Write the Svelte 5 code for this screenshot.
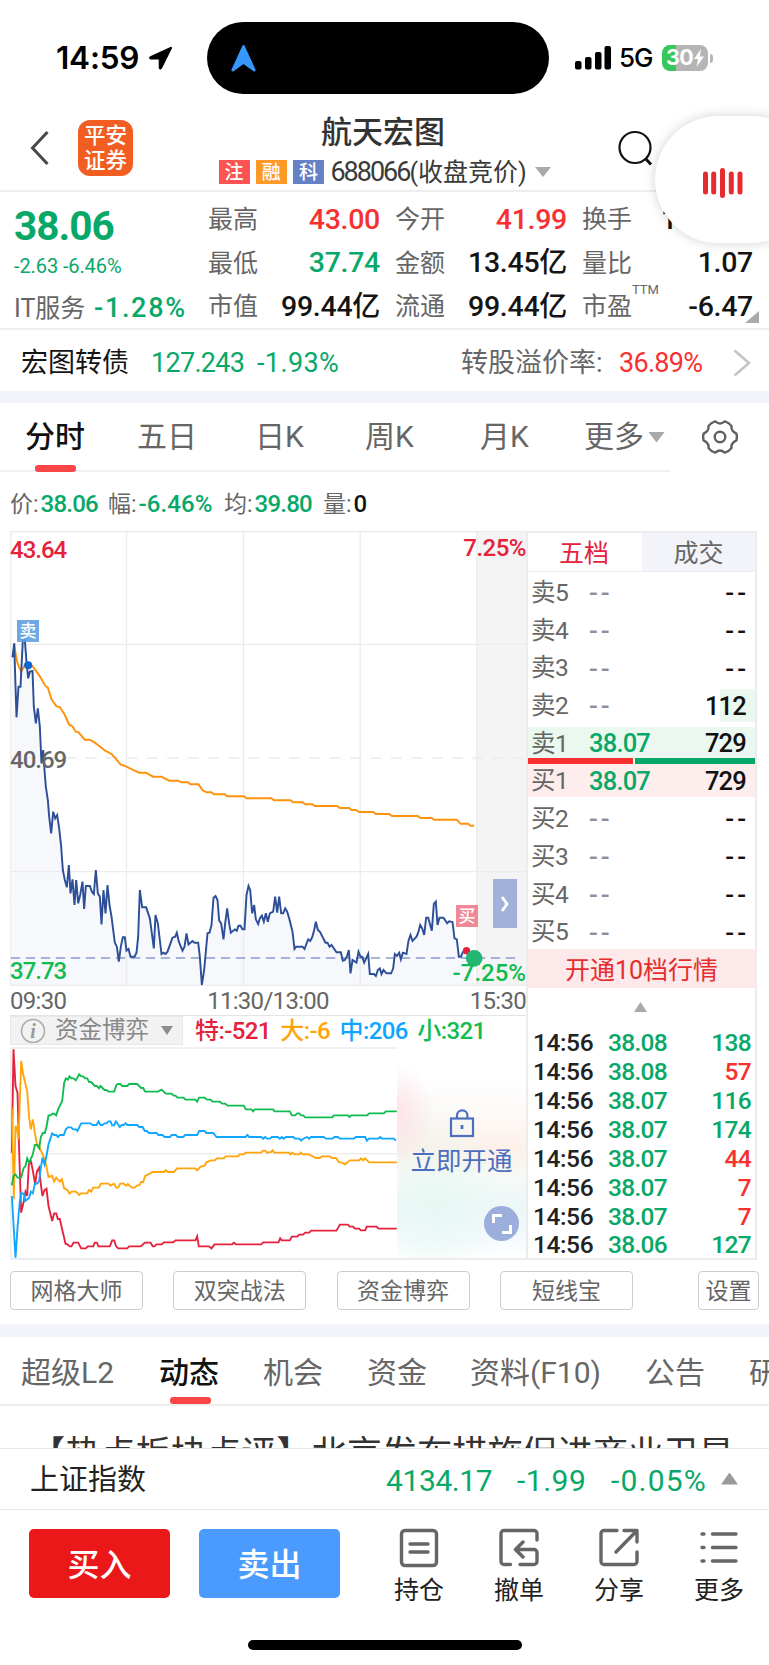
<script>
  const quotes = [
    ['最高', '43.00', 'red'], ['今开', '41.99', 'red'], ['换手', '12.35%', 'ink'],
    ['最低', '37.74', 'green'], ['金额', '13.45', 'ink', '亿'], ['量比', '1.07', 'ink'],
    ['市值', '99.44', 'ink', '亿'], ['流通', '99.44', 'ink', '亿'], ['市盈', '-6.47', 'ink']
  ];
  const asks = [['卖5'], ['卖4'], ['卖3'], ['卖2', '', '112'], ['卖1', '38.07', '729']];
  const bids = [['买1', '38.07', '729'], ['买2'], ['买3'], ['买4'], ['买5']];
  const ticks = [
    ['38.08', 138, 'green'], ['38.08', 57, 'red'], ['38.07', 116, 'green'], ['38.07', 174, 'green'],
    ['38.07', 44, 'red'], ['38.07', 7, 'red'], ['38.07', 7, 'red'], ['38.06', 127, 'green']
  ];
  const tools = ['网格大师', '双突战法', '资金博弈', '短线宝'];

  // Chart series are stored at three units per pixel.
  const price =
    '38,-278 43,-320 50,-98 56,-190 62,-190 69,-330 75,-330 80,-265 85,-215 90,-235 98,-237 102,-130 108,-80 114,-125 120,-70 125,40 130,0 134,60 138,110 144,150 148,200 154,250 160,185 166,205 172,195 178,235 184,290 189,360 195,390 201,412 207,345 212,430 218,388 224,465 229,390 235,460 241,435 248,395 253,477 258,408 270,408 276,425 282,432 288,360 294,430 300,440 305,523 311,420 317,490 323,405 329,465 335,500 345,578 351,590 357,635 363,590 369,562 375,562 380,602 386,597 392,620 404,620 410,608 415,560 420,420 427,472 439,472 450,505 456,550 462,595 467,495 474,520 480,570 485,612 491,608 497,612 503,605 518,563 526,560 531,548 537,575 548,602 554,590 560,550 566,583 578,573 584,578 595,578 600,620 606,705 613,660 623,550 629,548 635,525 641,443 647,438 653,450 658,512 664,520 671,568 676,520 682,475 688,520 693,548 705,538 711,542 716,527 722,527 728,538 734,538 740,435 746,408 751,420 757,490 763,465 768,508 775,522 780,505 786,497 792,515 798,490 804,515 810,490 820,485 826,440 832,488 838,440 844,490 850,490 856,475 862,485 868,505 878,545 884,597 889,590 908,590 914,597 925,568 931,573 937,562 943,540 948,515 954,540 960,545 977,578 983,578 989,590 995,585 1010,607 1023,607 1029,632 1035,630 1041,620 1047,600 1052,670 1058,630 1070,638 1076,605 1082,620 1087,620 1093,638 1105,612 1110,672 1122,672 1128,678 1134,660 1140,655 1145,672 1151,660 1160,670 1174,670 1180,655 1185,612 1191,618 1198,608 1203,628 1209,608 1220,612 1226,572 1232,555 1238,573 1250,560 1255,548 1261,525 1267,535 1273,555 1279,503 1285,503 1296,542 1302,462 1308,455 1313,525 1319,503 1331,503 1342,520 1348,514 1358,516 1364,565 1371,568 1377,620 1383,620 1390,605 1398,600 1408,622 1423,625';
  const average =
    '43,-320 47,-290 52,-265 58,-248 64,-235 75,-255 98,-252 110,-235 122,-218 136,-193 144,-187 155,-152 170,-131 180,-129 195,-105 208,-76 217,-72 228,-55 236,-53 255,-31 270,-31 285,-22 298,-12 316,2 335,12 348,26 362,43 380,50 404,62 418,68 438,68 460,80 485,80 508,92 535,92 545,97 565,97 572,103 596,103 608,121 620,127 635,127 642,133 675,133 682,139 732,139 740,145 815,145 822,151 872,151 880,157 908,157 916,163 938,163 945,168 1012,168 1020,174 1048,174 1055,180 1068,180 1078,186 1120,186 1128,192 1168,192 1176,198 1254,198 1262,204 1295,204 1303,209 1370,209 1382,221 1405,221 1412,227 1423,227';
  const flows = [
    ['#e5213c', '36,455 41,145 47,255 53,275 58,450 64,635 72,600 77,572 82,585 87,490 94,483 100,515 106,550 111,512 118,500 123,550 128,585 134,567 140,563 146,615 157,660 163,637 169,637 174,654 180,654 187,685 197,728 203,730 209,736 215,736 221,725 235,725 244,742 258,742 264,736 280,736 285,725 291,725 296,736 330,736 337,718 343,718 349,736 355,742 382,742 388,736 423,736 435,725 452,725 459,736 464,736 470,730 486,730 492,724 520,724 527,718 587,718 592,706 597,736 627,736 635,742 644,730 697,730 702,725 708,730 784,730 790,724 836,724 841,712 846,718 870,718 876,707 892,707 898,701 910,701 916,695 928,695 934,689 1010,689 1020,671 1044,671 1050,677 1060,677 1065,683 1078,683 1083,688 1096,688 1101,677 1130,677 1136,683 1191,683'],
    ['#ffa50a', '36,320 42,595 47,375 52,385 56,415 60,300 64,180 70,220 82,270 88,350 93,385 99,355 105,395 111,428 118,435 128,460 136,478 146,528 157,525 163,542 169,530 180,542 186,535 193,562 203,567 209,578 215,572 228,572 238,582 244,577 262,577 268,567 274,572 280,560 297,560 303,548 326,548 332,554 343,548 349,560 355,560 361,548 372,548 378,554 384,549 396,560 404,560 412,553 418,553 424,543 430,543 436,525 460,513 492,513 498,508 504,513 522,513 532,502 586,502 592,508 602,497 614,495 620,484 633,478 645,478 651,472 672,472 678,466 714,466 720,460 732,460 738,455 784,455 790,449 796,449 802,455 814,453 818,448 823,455 868,455 872,460 878,455 884,460 898,460 903,455 908,460 928,460 948,471 960,471 966,466 990,466 996,471 1008,471 1018,484 1024,484 1036,490 1050,478 1078,478 1084,472 1090,478 1095,472 1108,484 1191,484'],
    ['#10bc50', '36,553 41,525 47,520 53,530 64,530 71,502 77,495 82,472 88,485 99,460 105,432 111,432 118,442 123,408 129,396 135,396 140,378 146,343 152,343 158,338 163,338 169,343 175,325 187,300 193,245 198,232 204,236 209,226 215,232 221,232 228,238 238,220 244,226 250,226 256,232 262,232 268,243 274,243 285,255 291,255 297,262 302,255 314,267 320,267 326,272 343,272 350,252 355,249 362,249 367,255 382,255 388,249 412,249 424,261 430,261 436,272 475,272 485,266 498,278 515,278 522,284 527,284 533,290 551,290 557,296 586,296 592,302 598,290 614,290 622,296 632,296 638,302 660,302 667,308 676,308 684,314 732,314 738,325 755,325 760,331 765,325 820,325 824,331 870,331 876,343 886,343 892,337 898,337 904,343 910,343 916,349 998,349 1002,343 1044,343 1049,348 1054,343 1102,343 1108,337 1152,337 1158,331 1191,331'],
    ['#0fa6ff', '36,585 47,770 53,680 60,600 64,577 72,578 76,600 88,590 93,572 99,577 105,548 112,548 118,540 123,500 128,470 134,490 140,465 146,430 157,397 163,402 169,402 175,408 180,402 192,402 198,385 204,379 214,379 220,385 228,385 233,390 244,367 272,367 278,372 290,372 296,361 302,372 308,372 314,367 320,367 326,361 332,361 337,373 343,373 348,361 360,378 366,372 372,372 377,367 383,372 412,372 418,378 428,378 435,390 441,390 447,396 470,396 476,402 488,402 494,408 510,408 516,402 528,402 534,408 550,408 556,402 592,402 598,390 614,390 620,396 640,396 650,408 737,408 743,402 748,408 784,408 790,413 796,408 802,413 810,413 816,408 834,408 840,413 846,408 852,413 858,408 880,408 886,413 898,413 904,419 910,413 922,408 928,413 934,408 972,408 978,413 998,413 1004,408 1014,408 1020,413 1062,413 1068,408 1096,408 1101,419 1107,413 1136,413 1141,408 1147,413 1182,413 1188,419']
  ];
</script>

{#snippet level(row)}
  <div class="level">
    <span class="lv">{row[0]}</span>
    {#if row[1]}<span class="lp green">{row[1]}</span>{:else}<span class="dash">--</span>{/if}
    {#if row[2]}<span class="lq">{row[2]}</span>{:else}<span class="dash dark">--</span>{/if}
  </div>
{/snippet}

<div class="page">
  <div class="status">
    <span class="clock">14:59</span>
    <svg class="loc" width="24" height="24" viewBox="0 0 24 24"><path d="M22.200 1.500 2 10.800c-1.200.6-.8 2.200.4 2.200h8.400v8.700c0 1.300 1.700 1.600 2.200.4L22.800 2.200c.3-.6-.1-.9-.6-.7z" fill="#000" stroke="#000" stroke-width="1.200" stroke-linejoin="round" /></svg>
    <div class="island">
      <svg width="25" height="27" viewBox="0 0 25 27"><path d="M11.400.8c.4-1 1.800-1 2.200 0L24.500 24.500c.5 1.400-.8 2.500-2 1.700L12.500 19l-10 7.200c-1.200.8-2.500-.3-2-1.700z" fill="#3498ff" /></svg>
    </div>
    <svg class="bars" width="36" height="24" viewBox="0 0 36 24"><g fill="#000"><rect y="15" width="6.500" height="8.500" rx="2" /><rect x="10" y="11" width="6.500" height="12.500" rx="2" /><rect x="20" y="6" width="6.500" height="17.500" rx="2" /><rect x="29.500" y="0" width="6.500" height="23.500" rx="2" /></g></svg>
    <span class="net">5G</span>
    <div class="battery"><span>30</span><svg width="12" height="18" viewBox="0 0 12 18"><path d="M8 0 1 10h4l-1.500 8L11 7.500H6.800z" fill="#fff" /></svg></div>
    <i class="nub"></i>
  </div>

  <header>
    <svg class="back" width="20" height="36" viewBox="0 0 20 36"><path d="M17.500 2 2.500 18l15 16" fill="none" stroke="#484848" stroke-width="3" /></svg>
    <div class="logo"><span>平安</span><span>证券</span></div>
    <div class="names">
      <h1>航天宏图</h1>
      <div class="code">
        <b style="background:#fb5452">注</b><b style="background:#fd9a27">融</b><b style="background:#6681c6">科</b>
        <span><em>688066</em>(收盘竞价)</span>
        <svg width="16" height="10" viewBox="0 0 16 10"><path d="M0 0h16L8 10z" fill="#aaa" /></svg>
      </div>
    </div>
    <svg class="search" width="36" height="36" viewBox="0 0 36 36"><g fill="none" stroke="#111" stroke-width="2.200"><circle cx="17" cy="17.500" r="15.500" /><path d="m27.500 28.500 5.500 6" stroke-width="3" /></g></svg>
  </header>

  <section class="summary">
    <div class="main">
      <strong class="green">38.06</strong>
      <span class="chg green">-2.63 -6.46%</span>
      <div class="ind"><span>IT服务</span><b class="green">-1.28%</b></div>
    </div>
    <div class="quotes">
      {#each quotes as q}
        <div class="q"><span>{q[0]}</span><b class={q[2]}>{q[1]}{#if q[3]}<i>{q[3]}</i>{/if}</b></div>
      {/each}
    </div>
    <small class="ttm">TTM</small>
    <i class="corner"></i>
  </section>

  <section class="bond">
    <span class="ink">宏图转债</span><span class="green n">127.243</span><span class="green n pct">-1.93%</span>
    <span class="grey">转股溢价率:</span><span class="red n">36.89%</span>
    <svg width="18" height="28" viewBox="0 0 18 28"><path d="m1.500 1.500 14.500 12.500-14.500 12.500" fill="none" stroke="#c4c4c4" stroke-width="2.600" /></svg>
  </section>
  <div class="band"></div>

  <nav class="periods">
    <span class="on">分时</span><span>五日</span><span>日K</span><span>周K</span><span>月K</span>
    <span>更多<i class="down"></i></span>
    <svg width="36" height="36" viewBox="0 0 34 34"><g fill="none" stroke="#616161" stroke-width="2.300" stroke-linejoin="round"><path d="M12.500 2.200q2.500 2 4.500 2t4.500-2q4 1.200 6.300 4.300-.2 3 1.100 4.600 1.200 1.600 3.600 2.700.8 3.200 0 6.400-2.400 1.100-3.600 2.700-1.300 1.600-1.100 4.600-2.300 3.100-6.300 4.300-2.500-2-4.500-2t-4.500 2q-4-1.200-6.300-4.300.2-3-1.100-4.600-1.200-1.600-3.600-2.700-.8-3.200 0-6.400 2.400-1.100 3.600-2.700 1.300-1.600 1.100-4.600 2.300-3.100 6.300-4.300z" /><circle cx="17" cy="17" r="5" /></g></svg>
  </nav>

  <div class="legend">
    <span>价:<b class="green">38.06</b></span><span>幅:<b class="green w">-6.46%</b></span><span>均:<b class="green">39.80</b></span><span>量:<b class="ink">0</b></span>
  </div>

  <section class="trade">
    <div class="charts">
      <div class="chart">
        <svg width="516" height="455" viewBox="30.500 -657 1548 1365">
          <rect x="1431" y="-657" width="148" height="1362" fill="#f4f4f4" />
          <polygon points="{price} 1423,705 38,705" fill="#f6f8fc" />
          <g stroke="#ebebeb" stroke-width="4" fill="none">
            <path d="M33-655H1579M33-657V705M380-657V705M731-657V705M1081-657V705M1431-657V705M33-317H1579M33 365H1579M33 706H1579" />
            <path d="M33 24H1579" stroke-dasharray="33 28" stroke-dashoffset="-42" />
          </g>
          <path d="M33 624H1561" stroke="#8c9ccb" stroke-width="5" stroke-dasharray="28 17" />
          <polyline points={average} fill="none" stroke="#ff920d" stroke-width="5.800" />
          <polyline points={price} fill="none" stroke="#2d4f98" stroke-width="5.800" />
          <circle cx="85" cy="-254" r="12" fill="#0a66d4" />
          <circle cx="1400" cy="602" r="11" fill="#e5213c" />
          <circle cx="1423" cy="625" r="25" fill="#22b573" />
        </svg>
        <span class="lab tl">43.64</span><span class="lab tr">7.25%</span>
        <span class="lab ml">40.69</span><span class="lab bl">37.73</span><span class="lab br">-7.25%</span>
        <b class="mark sell">卖</b><b class="mark buy">买</b>
        <div class="expand"><svg width="10" height="16" viewBox="0 0 10 16"><path d="m2 1 5 7-5 7" fill="none" stroke="#fff" stroke-width="2.800" /></svg></div>
      </div>
      <div class="axis"><span>09:30</span><span>11:30/13:00</span><span>15:30</span></div>
      <div class="flowhead">
        <div class="pick">
          <svg width="26" height="26" viewBox="0 0 26 26"><circle cx="13" cy="13" r="11.500" fill="none" stroke="#aaa" stroke-width="1.500" /><text x="13" y="20" text-anchor="middle" font-family="Liberation Serif, serif" font-style="italic" font-weight="700" font-size="20" fill="#999">i</text></svg>
          <span>资金博弈</span><i class="down small"></i>
        </div>
        <span style="color:#e5213c">特:-521</span><span style="color:#ffa50a">大:-6</span><span style="color:#0fa6ff">中:206</span><span style="color:#10bc50">小:321</span>
      </div>
      <div class="flow">
        <svg width="387" height="213" viewBox="30.500 138 1161 639">
          <path d="M32 141H1192M33 141V775M32 458H1192M32 774H1192" stroke="#ebebeb" stroke-width="4" />
          {#each flows as f}<polyline points={f[1]} fill="none" stroke={f[0]} stroke-width="5.600" />{/each}
        </svg>
        <div class="locked">
          <svg width="26" height="30" viewBox="0 0 26 30"><g fill="none" stroke="#4c6fbd" stroke-width="2.200"><rect x="2" y="10.500" width="22" height="17.500" /><path d="M8 10V7.500a5.200 5.200 0 0 1 10.400 0V10" /><path d="M13 17v4" stroke-width="2.800" /></g></svg>
          <span>立即开通</span>
          <div class="full"><svg width="20" height="20" viewBox="0 0 20 20"><path d="M1.500 9V1.500H10M18.500 11v7.500H10" fill="none" stroke="#fff" stroke-width="3" /></svg></div>
        </div>
      </div>
    </div>

    <div class="book">
      <div class="booktabs"><span class="on">五档</span><span>成交</span></div>
      <div class="asks">{#each asks as r}{@render level(r)}{/each}</div>
      <div class="ratio"><i></i><i></i></div>
      <div class="bids">{#each bids as r}{@render level(r)}{/each}</div>
      <div class="open10">开通10档行情</div>
      <div class="fold"><i class="up"></i></div>
      <div class="ticks">
        {#each ticks as t}<div><span>14:56</span><span class="green">{t[0]}</span><span class={t[2]}>{t[1]}</span></div>{/each}
      </div>
    </div>
  </section>

  <div class="tools">
    {#each tools as t}<button>{t}</button>{/each}<button class="set">设置</button>
  </div>
  <div class="band second"></div>

  <nav class="topics">
    <span>超级L2</span><span class="on">动态</span><span>机会</span><span>资金</span><span>资料(F10)</span><span>公告</span><span>研报</span>
  </nav>
  <div class="news">【热点板块点评】北京发布措施促进商业卫星</div>

  <div class="index">
    <span class="nm">上证指数</span><span>4134.17</span><span class="s1">-1.99</span><span class="s2">-0.05%</span><i class="up"></i>
  </div>

  <footer>
    <button class="b red-bg">买入</button><button class="b blue-bg">卖出</button>
    <div class="act">
      <svg width="40" height="40" viewBox="0 0 40 40"><rect x="2.500" y="2.500" width="35" height="35" rx="3.500" /><path d="M11 16h18M11 24h18" /></svg>
      <span>持仓</span>
    </div>
    <div class="act">
      <svg width="40" height="40" viewBox="0 0 40 40"><path d="M11.500 36.500H5a3 3 0 0 1-3-3v-28a3 3 0 0 1 3-3h30a3 3 0 0 1 3 3V12M24 14l-7.500 7.500 7.500 7.500M17 21.500h18a3 3 0 0 1 3 3v9a3 3 0 0 1-3 3H21" /></svg>
      <span>撤单</span>
    </div>
    <div class="act">
      <svg width="40" height="40" viewBox="0 0 40 40"><path d="M18 2.500H5a3 3 0 0 0-3 3v28a3 3 0 0 0 3 3h30a3 3 0 0 0 3-3V24M25 2.500h13V14M37.500 3 17 24" /></svg>
      <span>分享</span>
    </div>
    <div class="act">
      <svg width="40" height="40" viewBox="0 0 40 40"><path d="M3 6h2M3 19.500h2M3 33h2M13.500 6H37M13.500 19.500H37M13.500 33H37" /></svg>
      <span>更多</span>
    </div>
  </footer>
  <div class="home"></div>

  <div class="float">
    <svg width="40" height="30" viewBox="0 0 40 30"><path d="M2.500 6v18M10.700 6v18M19.500 2.500v25M28.300 6v18M37 6v18" stroke="#e52d30" stroke-width="5" stroke-linecap="round" /></svg>
  </div>
</div>

<style>
  :global(body) { margin: 0; background: #fff; }
  .page {
    position: relative; width: 769px; height: 1665px; overflow: hidden; background: #fff; color: #666;
    font-family: Roboto, 'Noto Sans CJK SC', sans-serif; line-height: 1; white-space: nowrap;
    display: flex; flex-direction: column;
  }
  .page > * { flex: none; }
  * { box-sizing: border-box; }
  i, em { font-style: normal; }
  svg { display: block; flex: none; overflow: hidden; }
  .green { color: #07a868; }
  .red { color: #f73131; }
  .ink { color: #141414; }
  .grey { color: #666; }

  .status { height: 116px; display: flex; align-items: center; padding: 0 0 0 56px; color: #000; font-family: Inter, sans-serif; }
  .clock { font-size: 31.500px; font-weight: 600; width: 92px; letter-spacing: -.2px; }
  .loc { width: 25px; }
  .island { margin-left: 34px; width: 342px; height: 72px; border-radius: 36px; background: #000; display: flex; align-items: center; padding-left: 24px; }
  .bars { margin-left: 26px; }
  .net { margin-left: 8px; width: 43px; font-size: 26px; font-weight: 500; letter-spacing: -1px; }
  .battery { width: 46px; height: 26px; border-radius: 8px; background: linear-gradient(90deg, #35c759 14px, #b5b5b5 14px); color: #fff; display: flex; align-items: center; padding-left: 4px; }
  .battery span { font-size: 21.500px; font-weight: 700; letter-spacing: -.6px; }
  .nub { width: 3px; height: 9px; margin-left: 2px; border-radius: 0 4px 4px 0; background: #b5b5b5; }

  header { height: 76px; display: flex; border-bottom: 2px solid #eee; padding-left: 30px; }
  .back { margin-top: 14px; }
  .logo { margin: 4px 0 0 28px; width: 55px; height: 56px; border-radius: 12px; background: #f25d22; color: #fff; font-size: 21.500px; font-weight: 500; display: flex; flex-direction: column; align-items: center; justify-content: center; line-height: 25px; }
  .names { width: 486px; margin-left: 7px; display: flex; flex-direction: column; align-items: center; }
  h1 { margin: 1px 0 0; font-size: 31px; line-height: 32px; font-weight: 500; color: #333; }
  .code { display: flex; align-items: center; width: 334px; margin-top: 8px; height: 30px; margin-left: 5px; }
  .code b { width: 31px; height: 24px; margin-right: 6.300px; color: #fff; font-size: 19px; font-weight: 500; display: grid; place-items: center; }
  .code span { color: #3a3a3a; font-size: 25px; width: 205px; }
  .code em { font-size: 27px; letter-spacing: -2px; }
  .search { margin: 14px 0 0 -8px; }

  .summary { position: relative; height: 138px; border-bottom: 2px solid #eee; display: flex; }
  .main { width: 208px; padding-left: 14px; display: flex; flex-direction: column; }
  .main strong { font-size: 40.500px; letter-spacing: -1px; margin-top: 14px; height: 40px; }
  .chg { font-size: 20px; height: 21px; margin-top: 10px; letter-spacing: -.1px; }
  .ind { display: flex; margin-top: 17px; align-items: center; }
  .ind span { font-size: 25px; width: 80px; }
  .ind b { font-size: 27px; font-weight: 500; letter-spacing: 1.700px; padding-top: 1px; }
  .quotes { display: grid; grid-template-columns: 187px 187px 171px; grid-template-rows: repeat(3, 43.500px); padding-top: 6px; }
  .q { display: flex; justify-content: space-between; align-items: center; padding-right: 15px; }
  .q:nth-child(3n) { padding-right: 0; }
  .q span { font-size: 25px; }
  .q b { font-size: 28.500px; font-weight: 500; letter-spacing: -.3px; }
  .q b i { font-size: 28px; }
  .ttm { position: absolute; left: 632px; top: 91px; font-size: 13px; }
  .corner { position: absolute; left: 745px; top: 119px; width: 14px; height: 12px; background: #aaa; clip-path: polygon(100% 0, 100% 100%, 0 100%); }

  .bond { height: 61px; display: grid; grid-template-columns: 130px 106px 204px 158px 114px 20px; align-items: center; padding: 5px 0 0 21px; font-size: 27px; }
  .bond .n { font-size: 27px; letter-spacing: -.7px; }
  .bond .pct { letter-spacing: .4px; }
  .band { height: 12px; background: #f2f4f9; }
  .periods { height: 69px; width: 769px; display: grid; grid-template-columns: 112px 118px 110px 115px 104px 118px 40px; padding: 0 0 2px 25px; align-items: center; font-size: 30px; position: relative; }
  .periods::after { content: ''; position: absolute; left: 0; bottom: 0; width: 670px; height: 2px; background: #f1f1f1; }
  .periods .on, .topics .on { color: #111; font-weight: 500; position: relative; }
  .periods .on::after { content: ''; position: absolute; left: 10px; top: 43px; width: 41px; height: 7px; border-radius: 3px; background: #f94747; z-index: 1; }
  .down { display: inline-block; width: 17px; height: 11px; background: #aaa; clip-path: polygon(0 0, 100% 0, 50% 100%); margin-left: 4px; vertical-align: 4px; }
  .legend { height: 59px; display: grid; grid-template-columns: 98px 116px 99px 60px; align-items: center; padding: 4px 0 0 10px; font-size: 23px; }
  .legend b { font-size: 24px; font-weight: 500; letter-spacing: -.8px; margin-left: 2px; }
  .legend .w { letter-spacing: .1px; }

  .trade { height: 729px; display: flex; padding-left: 10px; }
  .charts { width: 518px; border-right: 2px solid #ececec; }
  .chart { position: relative; height: 455px; }
  .lab { position: absolute; font-size: 24px; font-weight: 500; letter-spacing: -1px; }
  .tl { left: 0; top: 7px; color: #e5213c; }
  .tr { right: 0; top: 5px; color: #e5213c; letter-spacing: -.5px; }
  .ml { left: 0; top: 217px; }
  .bl { left: 0; top: 428px; color: #10bc50; }
  .br { right: 0; top: 430px; color: #10bc50; letter-spacing: 0; }
  .mark { position: absolute; width: 22px; height: 22px; font-size: 17px; font-weight: 500; color: #fff; display: grid; place-items: center; }
  .sell { left: 7px; top: 89px; background: #5fa0e0e6; }
  .buy { left: 446px; top: 374px; background: #ef7b8ce6; }
  .expand { position: absolute; left: 483px; top: 348px; width: 24px; height: 49px; background: #a2b1da; display: grid; place-items: center; }
  .axis { height: 30px; display: grid; grid-template-columns: 1fr 1.100fr 1fr; align-items: center; font-size: 24px; letter-spacing: -.7px; padding: 1px 0 0 0; border-bottom: 1px solid #e4e4e4; }
  .axis span:nth-child(2) { text-align: center; }
  .axis span:nth-child(3) { text-align: right; }
  .flowhead { height: 31px; display: flex; align-items: center; font-size: 24px; font-weight: 500; }
  .flowhead > span { margin: 0 9.500px 2px 0; letter-spacing: -.6px; }
  .pick { width: 173px; height: 29px; margin: 0 12px 2px 0; background: #f2f2f2; border: 1px solid #e8e8e8; display: flex; align-items: center; padding-left: 9px; color: #888; font-weight: 400; font-size: 23.500px; }
  .pick span { margin-left: 9px; }
  .small { width: 12px; height: 9px; margin-left: 12px; background: #8c8c8c; vertical-align: 0; }
  .flow { display: flex; height: 213px; border-bottom: 2px solid #ececec; }
  .locked { position: relative; width: 129px; display: flex; flex-direction: column; align-items: center; padding-top: 61px; color: #4c6fbd; font-size: 25.500px; gap: 11px;
    background: radial-gradient(ellipse 30% 24% at 0% 31%, #fbd9e2aa, transparent), radial-gradient(ellipse at 30% 72%, #e2f8ef99, transparent 50%), linear-gradient(180deg, #fff 15%, #fdf9f7 32%, #fdf0e9 48%, #f6faf7 62%, #ecf7f8 76%, #f5fafe 92%, #fff); }
  .full { position: absolute; right: 7px; top: 159px; width: 35px; height: 35px; border-radius: 50%; background: #9caedb; display: grid; place-items: center; }

  .book { width: 229px; border-right: 2px solid #ececec; border-top: 2px solid #ececec; border-bottom: 2px solid #ececec; }
  .booktabs { height: 39px; display: grid; grid-template-columns: 114px 1fr; border-bottom: 1px solid #ececec; font-size: 25px; }
  .booktabs span { display: grid; place-items: center; padding-top: 3px; }
  .booktabs .on { color: #e5213c; background: #fff; padding-right: 2px; }
  .booktabs span:last-child { background: #f2f4f9; }
  .level { height: 33px; margin-bottom: 4.800px; display: grid; grid-template-columns: 58px 1fr 80px; align-items: center; padding: 2px 9px 0 3px; }
  .lv { font-size: 24.500px; letter-spacing: -.6px; }
  .lp, .lq { font-size: 25.500px; font-weight: 500; letter-spacing: -.8px; }
  .lq { text-align: right; color: #111; }
  .dash { font-size: 26px; color: #8e8e9c; font-weight: 500; letter-spacing: 3px; }
  .dark { color: #111; text-align: right; letter-spacing: 3px; margin-right: -3px; }
  .asks { height: 186px; padding-top: 3.500px; }
  .asks .level:nth-child(4) { background: linear-gradient(#eaf8f0, #eaf8f0) right / 35px 100% no-repeat; }
  .asks .level:nth-child(5) { background: #eaf8f0; margin: 0; }
  .ratio { height: 6px; display: flex; gap: 2px; }
  .ratio i { width: 104.500px; background: #fa2f2f; }
  .ratio i + i { flex: 1; background: #07a868; }
  .bids { height: 185px; overflow: hidden; }
  .bids .level:first-child { background: #fdeeed; }
  .open10 { height: 39px; background: #fde9e9; color: #e52d30; font-size: 25px; display: grid; place-items: center; padding-top: 4px; }
  .fold { height: 40px; display: grid; place-items: center; padding: 0 2px 2px 0; }
  .up { width: 13px; height: 10px; background: #aaa; clip-path: polygon(50% 0, 100% 100%, 0 100%); }
  .ticks div { height: 28.900px; display: grid; grid-template-columns: 75px 1fr 50px; align-items: center; padding: 2px 4px 0 5px; font-size: 24.500px; font-weight: 500; letter-spacing: -.7px; }
  .ticks span:first-child { color: #222; letter-spacing: -.4px; }
  .ticks span:last-child { text-align: right; }

  button { font: inherit; padding: 0; }
  .tools { height: 64px; padding: 11px 10px 0; display: flex; gap: 30.300px; }
  .tools button { width: 133px; height: 39px; border: 1.500px solid #ccc; border-radius: 4px; background: #fff; color: #666; font-size: 23px; padding-top: 2px; }
  .tools .set { width: 61px; margin-left: auto; }
  .band.second { height: 13px; }
  .topics { height: 69px; border-bottom: 2px solid #eee; display: grid; grid-template-columns: 138px 104px 104px 103px 175px 104px 60px; align-items: center; padding: 4px 0 0 21px; font-size: 30px; }
  .topics .on::after { content: ''; position: absolute; left: 11px; top: 39px; width: 41px; height: 7px; border-radius: 3px; background: #f94747; }
  .news { height: 42px; overflow: hidden; padding: 30px 0 0 30px; font-size: 35.200px; line-height: 36px; color: #333; font-weight: 400; }
  .index { height: 62px; border-top: 1px solid #e6e6e6; border-bottom: 1px solid #e6e6e6; display: grid; grid-template-columns: 356px 131px 94px 110px 20px; align-items: center; padding: 3px 0 0 30px; font-size: 30px; color: #07a868; letter-spacing: -.4px; }
  .index .nm { font-size: 29px; color: #222; letter-spacing: 0; }
  .index .s1 { letter-spacing: .5px; }
  .index .s2 { letter-spacing: 1.200px; }
  .index .up { width: 17px; height: 12px; background: #999; margin-bottom: 4px; }
  footer { height: 129px; padding: 19px 0 0 29px; display: flex; align-items: flex-start; }
  .b { width: 141px; height: 69px; border: 0; border-radius: 5px; color: #fff; font-size: 32px; font-weight: 500; margin-right: 29px; padding-top: 3px; }
  .red-bg { background: #ea1819; }
  .blue-bg { background: #4b9afe; }
  .act { width: 100px; display: flex; flex-direction: column; align-items: center; gap: 10px; margin-top: -1px; color: #222; font-size: 25px; }
  .act svg { fill: none; stroke: #666; stroke-width: 3.400; stroke-linecap: round; stroke-linejoin: round; }
  .home { width: 274px; height: 10px; border-radius: 5px; background: #000; margin: 1px 0 0 248px; }
  .float { position: absolute; left: 655px; top: 116px; width: 160px; height: 127px; border-radius: 64px; background: #fff; box-shadow: 0 0 12px #0000002e; display: flex; align-items: center; padding: 6px 0 0 48px; }
</style>
